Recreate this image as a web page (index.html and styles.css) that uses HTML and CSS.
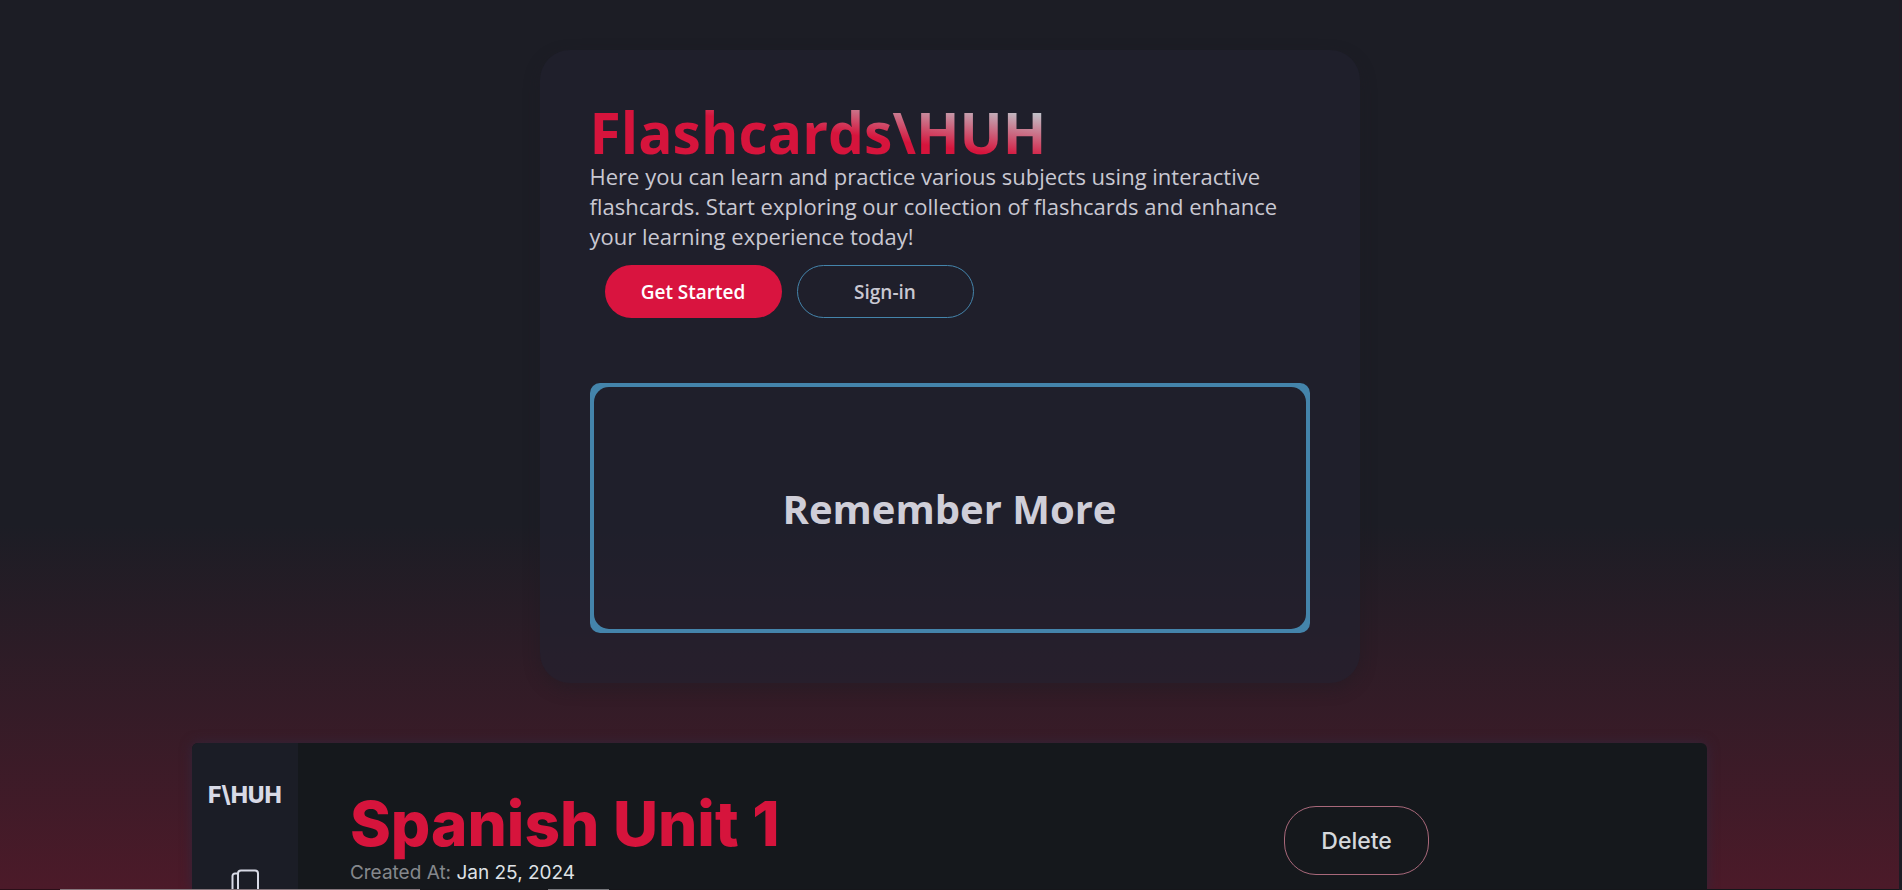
FILE: index.html
```html
<!DOCTYPE html>
<html lang="en">
<head>
<meta charset="utf-8">
<title>Flashcards\HUH</title>
<link rel="stylesheet" href="styles.css">
</head>
<body class="page">
<main class="landing">
  <section class="hero">
    <h1 class="hero-title">Flashcards\HUH</h1>
    <p class="hero-text">Here you can learn and practice various subjects using interactive flashcards. Start exploring our collection of flashcards and enhance your learning experience today!</p>
    <div class="hero-actions">
      <button class="button button-primary" type="button">Get Started</button>
      <button class="button button-outline" type="button">Sign-in</button>
    </div>
    <div class="flashcard">
      <div class="flashcard-face"><h2 class="flashcard-title">Remember More</h2></div>
    </div>
  </section>
  <section class="preview">
    <aside class="preview-side">
      <div class="preview-logo">F\HUH</div>
      <svg class="preview-icon" viewBox="0 0 28 32" aria-hidden="true"><path d="M10 1.500h14a3 3 0 0 1 3 3V28a3 3 0 0 1-3 3H10a3 3 0 0 1-3-3V4.500a3 3 0 0 1 3-3zM7 4.500H4a2.500 2.500 0 0 0-2.500 2.500v18A2.500 2.500 0 0 0 4 27.500h3"/></svg>
    </aside>
    <div class="preview-main">
      <div class="preview-heading">
        <h2 class="preview-title">Spanish Unit 1</h2>
        <p class="preview-meta">Created At: <span class="preview-date">Jan 25, 2024</span></p>
      </div>
      <button class="preview-delete" type="button">Delete</button>
    </div>
  </section>
</main>
</body>
</html>
```
FILE: styles.css
```css
* {
  box-sizing: border-box;
}

html {
  height: 100%;
  background: #1c1d25;
}

.page {
  position: relative;
  height: 100%;
  margin: 0;
  overflow: hidden;
  border-right: 3px solid #1e1b24;
  background: linear-gradient(#1c1d25 59%, #4c1a29 100%);
  color: #c9c8d2;
  font-family: "Segoe UI", "Open Sans", sans-serif;
}

/* thin broken line along the bottom edge */
.page::after {
  content: "";
  position: absolute;
  right: 0;
  bottom: 0;
  left: 0;
  height: 1px;
  background: linear-gradient(to right, #2a0f18 60px, #86767c 60px 420px, #15161a 420px 548px, #77777b 548px 609px, #15161a 609px);
}

.landing {
  display: flex;
  flex-direction: column;
  align-items: center;
  gap: 60px;
  height: 100%;
  padding-top: 50px;
}

.hero {
  flex: none;
  width: 820px;
  max-width: 100%;
  padding: 50px;
  border-radius: 30px;
  background: rgba(34, 33, 48, 0.6);
  box-shadow: 0 6px 16px rgba(30, 28, 34, 0.4);
}

.hero-title {
  width: fit-content;
  margin: 0;
  padding-top: 4px;
  background: linear-gradient(to top right, #d6143c 50%, #c0c0c8 88%);
  background-clip: text;
  color: transparent;
  font-size: 57px;
  font-weight: 700;
  line-height: 57px;
}

.hero-text {
  margin: 0;
  font-size: 22px;
  line-height: 30px;
}

.hero-actions {
  display: flex;
  gap: 15px;
  margin: 14px 15px 65px;
}

.button {
  width: 177px;
  height: 53px;
  border: 0;
  border-radius: 27px;
  font: 600 19px "Segoe UI", "Open Sans", sans-serif;
}

.button-primary {
  background: #d9143f;
  color: #fff;
}

.button-outline {
  border: 1px solid #4484ab;
  background: transparent;
  color: #c9c8d2;
}

.flashcard {
  height: 250px;
  padding: 4px;
  overflow: hidden;
  border-radius: 10px;
}

/* the frame is the area around the face, cut off by the card's own corners */
.flashcard-face {
  display: flex;
  align-items: center;
  justify-content: center;
  height: 100%;
  border-radius: 15px;
  box-shadow: 0 0 0 10px #4484ab;
}

.flashcard-title {
  margin: 0;
  padding-top: 2px;
  color: #cfced8;
  font-size: 40px;
  line-height: 50px;
}

.preview {
  flex: 1;
  display: flex;
  width: calc(80% - 4px);
  min-height: 0;
  overflow: hidden;
  border-radius: 6px 6px 0 0;
  background: #15181c;
  box-shadow: 0 0 12px #33253a;
  font-family: Inter, sans-serif;
}

.preview-side {
  display: flex;
  flex: none;
  flex-direction: column;
  align-items: center;
  gap: 58px;
  width: 106px;
  padding-top: 36px;
  background: #1b1d26;
}

.preview-logo {
  color: #d8dae6;
  font-size: 23px;
  font-weight: 800;
  line-height: 32px;
}

.preview-icon {
  flex: none;
  width: 28px;
  height: 32px;
  fill: none;
  stroke: #d8dae6;
  stroke-width: 2;
}

.preview-main {
  display: flex;
  flex: 1;
  align-items: flex-start;
  justify-content: space-between;
  padding: 44px 278px 0 52px;
}

.preview-title {
  margin: 0;
  color: #d6143c;
  font-size: 62px;
  font-weight: 800;
  line-height: 74px;
}

.preview-meta {
  margin: 0;
  color: #85888c;
  font-size: 19px;
  line-height: 24px;
}

.preview-date {
  color: #dfe2e6;
}

.preview-delete {
  width: 145px;
  height: 69px;
  margin-top: 19px;
  border: 1px solid #a8687a;
  border-radius: 32px;
  background: transparent;
  color: #d5d9dc;
  font: 500 23px Inter, sans-serif;
}
```
